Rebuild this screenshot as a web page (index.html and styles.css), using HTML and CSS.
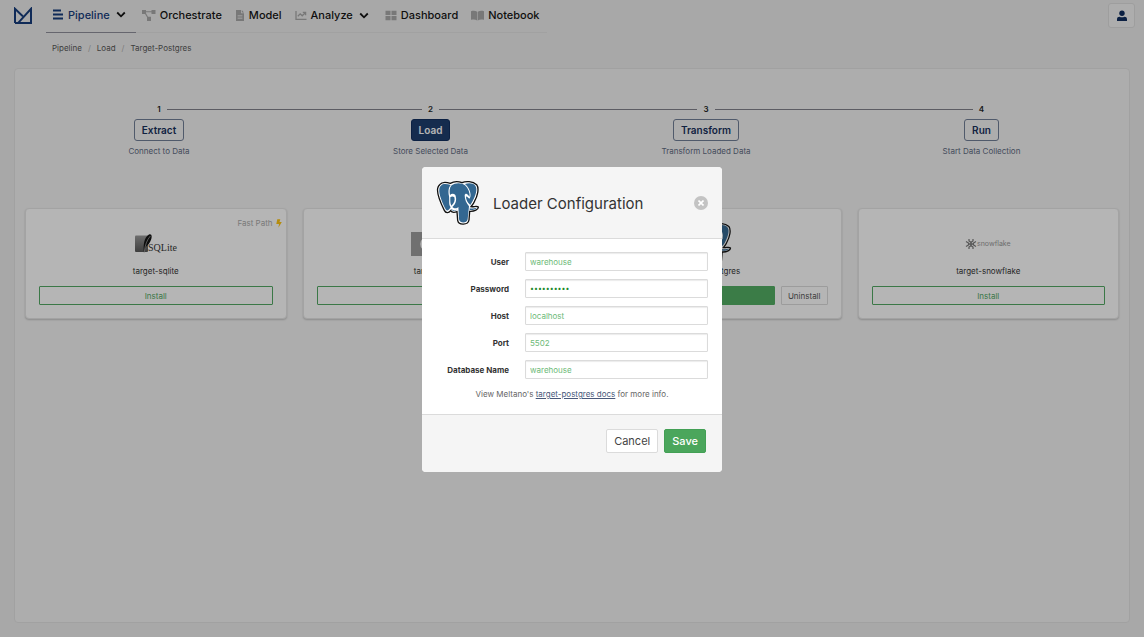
FILE: index.html
```html
<!DOCTYPE html>
<html lang="en">
<head>
<meta charset="utf-8">
<meta name="viewport" content="width=device-width, initial-scale=1">
<title>Meltano</title>
<link rel="stylesheet" href="styles.css">
</head>
<body>
<svg class="defs" aria-hidden="true">
  <symbol id="chevron" viewBox="0 0 10 7"><path d="M1.2 1.5 5 5.3 8.8 1.5" fill="none" stroke="currentColor" stroke-width="1.8"/></symbol>
  <symbol id="postgres" viewBox="34 30 130 138">
    <path d="M44 44C50 36 64 36 76 40 86 34 101 34 111 38 122 33 143 33 155 44 163 55 158 77 148 95 145 102 141 106 138 110 147 111 156 107 160 111 161 118 148 125 134 124L132 150C129 166 101 167 98 151L96 125C88 128 80 127 77 122 70 131 62 129 58 121 48 101 35 72 38 55 39 50 41 47 44 44Z" fill="#fff" stroke="#111" stroke-width="4"/>
    <g fill="#336791">
      <path d="M48 47C54 40 66 42 77 45 69 54 70 68 72 78 74 94 70 102 77 112 72 119 67 126 62 118 54 102 40 72 43 56 44 52 45 49 48 47Z"/>
      <path d="M80 46C91 37 111 38 120 46 130 55 135 69 134 80L129 75C125 70 120 70 119 76 119 88 124 100 132 109L128 148C125 161 105 161 102 148L100 110C97 115 88 117 82 111 93 102 96 88 91 75 86 70 79 71 75 75 73 64 73 54 80 46Z"/>
      <path d="M120 42C131 38 144 39 151 47 158 57 152 76 144 91 141 98 138 101 136 105 127 97 123 88 123 80 126 79 129 84 133 86 140 82 138 57 120 42Z"/>
      <path d="M76 82C80 78 85 79 88 82 91 91 87 100 79 107 75 100 76 91 76 82Z"/>
      <path d="M77 116C82 120 88 122 95 119L95 121C87 124 80 122 77 116ZM134 115C142 117 149 114 156 113 151 119 142 121 134 120Z"/>
    </g>
  </symbol>
</svg>

<header class="topbar">
  <a class="brand" href="#" aria-label="Meltano">
    <svg viewBox="0 0 20 18" width="20" height="18"><path d="M2 16V1.800L9.800 9.200M2 16H18V1.800L5.200 15.800" fill="none" stroke="currentColor" stroke-width="2"/></svg>
  </a>
  <nav class="nav" aria-label="Main">
    <a class="nav-item nav-item-menu nav-item-active" href="#">
      <svg viewBox="0 0 12 11" width="12" height="11"><path d="M1 1.5h8M1 5.5h10M1 9.5h10" stroke="currentColor" stroke-width="2.2" fill="none"/></svg>
      <span>Pipeline</span><svg class="chevron" width="10" height="7"><use href="#chevron"/></svg>
    </a>
    <a class="nav-item" href="#">
      <svg viewBox="0 0 14 11" width="14" height="11" fill="currentColor"><path d="M0 0h4v1.2h5.5V0h4v4h-4V2.3H4v1L6 6.8h3V11H5V7.2L3 4H0Z"/></svg>
      <span>Orchestrate</span>
    </a>
    <a class="nav-item" href="#">
      <svg viewBox="0 0 10 11" width="10" height="11"><path d="M1 0h5v3.2h3V11H1ZM6.8 0 9 2.4H6.8Z" fill="currentColor"/><path d="M2.6 5.5h4.8M2.6 7h4.8M2.6 8.5h4.8" stroke="#eee" stroke-width=".6"/></svg>
      <span>Model</span>
    </a>
    <a class="nav-item nav-item-menu" href="#">
      <svg viewBox="0 0 12 11" width="12" height="11" fill="none" stroke="currentColor" stroke-width="1.3"><path d="M1 1v8.3h10.5M2.8 6.2l2.4-2.4 2 2L10 3M7.8 2.4h2.8v2.8"/></svg>
      <span>Analyze</span><svg class="chevron" width="10" height="7"><use href="#chevron"/></svg>
    </a>
    <a class="nav-item" href="#">
      <svg viewBox="0 0 12 11" width="12" height="11" fill="currentColor"><path d="M.5.700h5v4.300h-5ZM6.500.700h5v4.300h-5ZM.5 6h5v4.300h-5ZM6.500 6h5v4.300h-5Z"/></svg>
      <span>Dashboard</span>
    </a>
    <a class="nav-item" href="#">
      <svg viewBox="0 0 13 11" width="13" height="11" fill="currentColor"><path d="M0 1.2C2.5.6 4.5.8 6.2 1.800v8.600C4.5 9.400 2.5 9.400 0 9.800ZM13 1.2C10.500.6 8.500.8 6.800 1.800v8.600C8.500 9.400 10.500 9.400 13 9.800Z"/></svg>
      <span>Notebook</span>
    </a>
  </nav>
  <button class="user" type="button" aria-label="Account">
    <svg viewBox="0 0 10 12" width="10" height="12" fill="currentColor"><circle cx="5" cy="3.300" r="2.700"/><path d="M0 11V9.300C0 7.600 1 6.800 2.600 6.800 4 7.500 6 7.500 7.400 6.800 9 6.800 10 7.600 10 9.300V11Z"/></svg>
  </button>
</header>

<nav class="breadcrumb" aria-label="Breadcrumb">
  <a href="#">Pipeline</a><i>/</i><a href="#">Load</a><i>/</i><a href="#">Target-Postgres</a>
</nav>

<main class="panel">
  <ol class="steps">
    <li class="step"><div class="step-line"><b>1</b></div><button class="step-button" type="button">Extract</button><p>Connect to Data</p></li>
    <li class="step"><div class="step-line"><b>2</b></div><button class="step-button step-button-active" type="button">Load</button><p>Store Selected Data</p></li>
    <li class="step"><div class="step-line"><b>3</b></div><button class="step-button" type="button">Transform</button><p>Transform Loaded Data</p></li>
    <li class="step"><div class="step-line"><b>4</b></div><button class="step-button" type="button">Run</button><p>Start Data Collection</p></li>
  </ol>

  <section class="cards">
    <article class="card">
      <span class="fast-path">Fast Path <svg viewBox="0 0 6 9" width="6" height="9"><path d="M1.300.3H4.300L3.500 3H5.800L2.400 8.700 3 5H.3Z" fill="#ffc50f"/></svg></span>
      <div class="card-logo">
        <svg viewBox="0 0 44 22" width="44" height="22" role="img" aria-label="SQLite">
          <defs><linearGradient id="slate" x2="0" y2="1"><stop stop-color="#999"/><stop offset="1" stop-color="#555"/></linearGradient></defs>
          <rect x="1" y="2.500" width="13" height="16.500" rx="1" fill="url(#slate)"/>
          <path d="M10 20C9 13 10 4 15 1.500 18 .5 18.500 4 16.500 8 15 12 12 13 11 15.500Z" fill="#111"/>
          <path d="M10.300 19C11 12 13 7 16.300 3" fill="none" stroke="#aaa" stroke-width=".7"/>
          <text class="sqlite-text" x="14" y="18">SQLite</text>
        </svg>
      </div>
      <h2>target-sqlite</h2>
      <div class="card-actions"><button class="button button-outline" type="button">Install</button></div>
    </article>
    <article class="card">
      <div class="card-logo">
        <svg viewBox="0 0 44 24" width="44" height="24" role="img" aria-label="CSV"><rect width="44" height="24" fill="#9c9c9c"/><path d="M17 7C8 4 8 20 17 17M27 7C18 5 20 12 24 12S28 18 20 17M30 7 34 17 38 7" fill="none" stroke="#fff" stroke-width="2"/></svg>
      </div>
      <h2>target-csv</h2>
      <div class="card-actions"><button class="button button-outline" type="button">Install</button></div>
    </article>
    <article class="card">
      <div class="card-logo"><svg width="44" height="44" role="img" aria-label="PostgreSQL"><use href="#postgres"/></svg></div>
      <h2>target-postgres</h2>
      <div class="card-actions"><button class="button button-solid" type="button">Configure</button><button class="button button-plain" type="button">Uninstall</button></div>
    </article>
    <article class="card">
      <div class="card-logo">
        <svg viewBox="0 0 48 12" width="48" height="12" role="img" aria-label="Snowflake">
          <g fill="none" stroke="#777" stroke-width="1.200"><path d="M7 4.700 8.300 6 7 7.300 5.700 6ZM5 1v2L7 4.200 9 3V1M5 11V9L7 7.800 9 9v2M2 3.500 4.500 5v2L2 8.500M12 3.500 9.500 5v2l2.500 1.500"/></g>
          <text class="snowflake-text" x="13" y="8">snowflake</text>
        </svg>
      </div>
      <h2>target-snowflake</h2>
      <div class="card-actions"><button class="button button-outline" type="button">Install</button></div>
    </article>
  </section>
</main>

<div class="overlay">
  <form class="modal" role="dialog" aria-modal="true" aria-labelledby="modal-title">
    <header class="modal-head">
      <svg width="44" height="46" role="img" aria-label="PostgreSQL"><use href="#postgres"/></svg>
      <h1 id="modal-title">Loader Configuration</h1>
      <button class="close" type="button" aria-label="Close"><svg viewBox="0 0 6 6" width="6" height="6"><path d="M.5.5l5 5M5.500.5l-5 5" stroke="#fff" stroke-width="1.600"/></svg></button>
    </header>
    <div class="modal-body">
      <div class="fields">
        <label for="user">User</label><input id="user" type="text" value="warehouse">
        <label for="password">Password</label><input id="password" type="password" value="warehouse1">
        <label for="host">Host</label><input id="host" type="text" value="localhost">
        <label for="port">Port</label><input id="port" type="text" value="5502">
        <label for="database">Database Name</label><input id="database" type="text" value="warehouse">
      </div>
      <p class="help">View Meltano's <a href="#">target-postgres docs</a> for more info.</p>
    </div>
    <footer class="modal-foot">
      <button class="cancel" type="button">Cancel</button>
      <button class="save" type="submit">Save</button>
    </footer>
  </form>
</div>
</body>
</html>
```

FILE: styles.css
```css
* { box-sizing: border-box; }
body {
  margin: 0;
  min-height: 100vh;
  display: flex;
  flex-direction: column;
  background: #ededed;
  color: #333;
  font: 8px/12px Inter, "Liberation Sans", sans-serif;
}
h1, h2, p, ol { margin: 0; padding: 0; font-weight: 400; }
button, input { font: inherit; margin: 0; }
svg { display: block; flex: none; }
a { color: inherit; text-decoration: none; }
.defs { position: absolute; width: 0; height: 0; }

.topbar { display: flex; align-items: flex-start; padding: 0 9px 0 13px; }
.brand { margin: 7px 13px 0 0; color: #133a7a; }
.nav { display: flex; border-bottom: 1px solid #e2e2e2; }
.nav-item {
  display: flex;
  align-items: center;
  gap: 4px;
  height: 33px;
  padding: 0 7px 3px 6px;
  margin-bottom: -1px;
  font-size: 11px;
  font-weight: 500;
  line-height: 16px;
  color: #a8a8a8;
}
.nav-item span, .nav-item .chevron { color: #111; }
.nav-item .chevron { margin-left: 2px; }
.nav-item-menu { padding-right: 10px; }
.nav-item-active { border-bottom: 1px solid #8f8f9a; color: #133a7a; }
.nav-item-active span { color: #133a7a; }
.user {
  display: flex;
  align-items: center;
  justify-content: center;
  width: 27px;
  height: 25px;
  margin: 3px 0 0 auto;
  padding: 0;
  border: 1px solid #dedede;
  border-radius: 3px;
  background: #f4f4f4;
  color: #0c2a5c;
}
.breadcrumb { display: flex; gap: 5px; padding: 9px 52px; line-height: 12px; color: #555; }
.breadcrumb i { padding: 0 1px; font-style: normal; color: #b0b0b0; }

.panel {
  flex: 1;
  margin: 5px 14px 14px;
  padding: 34px 10px;
  border: 1px solid #e2e2e2;
  border-radius: 4px;
  background: #f4f4f4;
}
.steps { display: grid; grid-template-columns: 268fr 275fr 276fr 275fr; list-style: none; }
.step { display: flex; flex-direction: column; align-items: center; color: #5d6980; }
.step-line { display: flex; align-items: center; align-self: stretch; gap: 6px; color: #222; }
.step-line::before, .step-line::after { content: ""; flex: 1; border-top: 1px solid #80808a; }
.step:first-child .step-line::before, .step:last-child .step-line::after { visibility: hidden; }
.step-line b { font-weight: 600; }
.step-button {
  height: 22px;
  margin: 4px 0;
  padding: 0 7px;
  border: 1px solid #6f7d95;
  border-radius: 3px;
  background: transparent;
  color: #152d59;
  font-size: 10px;
  font-weight: 600;
}
.step-button-active { border-color: #0e2b5c; background: #1b3c6c; color: #fff; }

.cards { display: grid; grid-template-columns: repeat(4, 1fr); gap: 16px; margin-top: 51px; }
.card {
  position: relative;
  padding: 13px;
  border: 1px solid #e6e6e6;
  border-radius: 4px;
  background: #fff;
  box-shadow: 0 1px 2px rgba(0, 0, 0, .2);
  text-align: center;
}
.card-logo { display: flex; align-items: center; justify-content: center; height: 43px; }
.card h2 { font-size: 8px; line-height: 12px; }
.card-actions { display: flex; gap: 6px; margin-top: 9px; }
.fast-path { position: absolute; top: 8px; right: 4px; display: flex; align-items: center; gap: 3px; color: #aaa; }
.sqlite-text { font: 10px "Liberation Serif", serif; fill: #333; }
.snowflake-text { font: 7px Inter, sans-serif; fill: #999; }
.button { height: 19px; padding: 0 6px; border: 1px solid; border-radius: 1px; background: transparent; line-height: 12px; }
.button-outline { flex: 1; border-color: #51a862; color: #51a862; }
.button-solid { flex: 1; border-color: #51ae62; background: #51ae62; color: #fff; }
.button-plain { border-color: #dbdbdb; color: #555; }

.overlay {
  position: fixed;
  inset: 0;
  display: flex;
  align-items: center;
  justify-content: center;
  padding-top: 2px;
  background: rgba(10, 10, 10, .3);
}
.modal { width: 300px; max-width: 100%; border-radius: 4px; background: #fff; overflow: hidden; }
.modal-head {
  display: flex;
  align-items: center;
  padding: 13px 14px 12px;
  border-bottom: 1px solid #dbdbdb;
  background: #f5f5f5;
}
.modal-head h1 { flex: 1; margin-left: 13px; padding-top: 2px; font-size: 15px; line-height: 20px; color: #333; }
.close {
  display: flex;
  align-items: center;
  justify-content: center;
  width: 14px;
  height: 14px;
  padding: 0;
  border: 0;
  border-radius: 50%;
  background: #c3c3c3;
}
.modal-body { padding: 13px 14px 14px; }
.fields { display: grid; grid-template-columns: 73px 1fr; gap: 8px 16px; align-items: center; }
.fields label { text-align: right; font-weight: 700; }
.fields input {
  width: 100%;
  min-width: 0;
  height: 19px;
  padding: 0 4px;
  border: 1px solid #dbdbdb;
  border-radius: 1px;
  background: #fff;
  box-shadow: inset 0 1px 1px rgba(10, 10, 10, .08);
  color: #6dba78;
}
.fields input[type="password"] { font-size: 7px; color: #1c8a2c; }
.help { margin-top: 9px; text-align: center; color: #666; }
.help a { color: #49597a; text-decoration: underline; }
.modal-foot {
  display: flex;
  justify-content: flex-end;
  gap: 6px;
  padding: 14px 16px 19px;
  border-top: 1px solid #dbdbdb;
  background: #f5f5f5;
}
.modal-foot button { height: 24px; padding: 0 7px; border: 1px solid #dbdbdb; border-radius: 2px; background: #fff; font-size: 11px; color: #444; }
.modal-foot .save { border-color: #43a055; background: #4ba65c; color: #fff; font-weight: 500; }
```
